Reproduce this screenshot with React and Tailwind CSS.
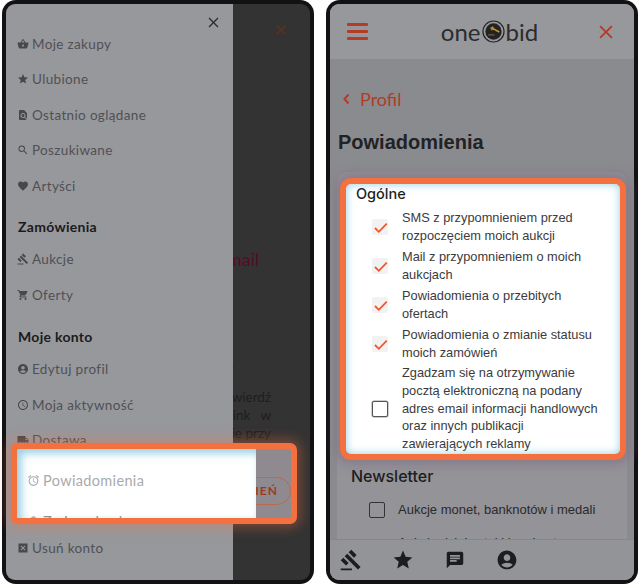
import React from "react";
import { MdShoppingBasket, MdStar, MdFindInPage, MdSearch, MdFavorite, MdGavel, MdShoppingCart, MdAccountCircle, MdAccessTime, MdLocalShipping, MdAlarm, MdDisabledByDefault, MdLock, MdChat, MdClose } from "react-icons/md";

const P = "font-['Lato','Noto_Sans',sans-serif]";

function Item({ icon: I, label }) {
  return (
    <div className="flex items-center h-[35.5px] pl-[11px] text-[#4f5054] text-[13.5px] tracking-[0.35px] whitespace-nowrap">
      <I className="w-[12px] h-[12px] mr-[3px] shrink-0 text-[#47484b]" />
      <span>{label}</span>
    </div>
  );
}

function Head({ label, cls }) {
  return <div className={`pl-[12px] font-bold text-[14px] tracking-[0.3px] text-[#1b1b1d] h-[18px] leading-[18px] ${cls}`}>{label}</div>;
}

function LeftPhone() {
  return (
    <div className="relative w-[312px] h-[584px] bg-[#121214] rounded-[14px] p-[4px]">
      <div className={`flex h-full rounded-[9px] overflow-hidden ${P}`}>
        <div className="w-[227px] shrink-0 bg-[#97989c] overflow-hidden">
          <div className="flex justify-end items-start pr-[11px] pt-[10px] h-[22px]">
            <MdClose className="w-[17px] h-[17px] shrink-0 text-[#2f3033]" />
          </div>
          <Item icon={MdShoppingBasket} label="Moje zakupy" />
          <Item icon={MdStar} label="Ulubione" />
          <Item icon={MdFindInPage} label="Ostatnio oglądane" />
          <Item icon={MdSearch} label="Poszukiwane" />
          <Item icon={MdFavorite} label="Artyści" />
          <Head label="Zamówienia" cls="mt-[14px] mb-[6px]" />
          <Item icon={MdGavel} label="Aukcje" />
          <Item icon={MdShoppingCart} label="Oferty" />
          <Head label="Moje konto" cls="mt-[15px] mb-[6px]" />
          <Item icon={MdAccountCircle} label="Edytuj profil" />
          <Item icon={MdAccessTime} label="Moja aktywność" />
          <Item icon={MdLocalShipping} label="Dostawa" />
          <div className="h-[72px]" />
          <Item icon={MdDisabledByDefault} label="Usuń konto" />
        </div>
        <div className="flex-1 bg-[#333333] overflow-hidden">
          <div className="flex justify-end pt-[17px] pr-[20px] h-[54px]">
            <MdClose className="w-[18px] h-[18px] text-[#5e3020]" />
          </div>
          <div className="mt-[189px] h-[24px] text-[18px] leading-[24px] text-[#5c0a24] whitespace-nowrap ml-[-6px]">mail</div>
          <div className="mt-[83px] h-[22px] text-[13px] leading-[22px] text-[#1e1e1e] ml-[-6px]">e</div>
          <div className="mt-[12px] text-[13.5px] leading-[18px] text-[#1e1e1e] whitespace-nowrap w-[38px] flex flex-col items-end">
            <div>wierdź</div>
            <div>link&nbsp;&nbsp; w</div>
            <div>ie przy</div>
          </div>
        </div>
      </div>
      {/* highlighted element */}
      <div className={`absolute left-[9px] top-[443px] w-[286px] h-[81px] border-[6px] border-[#f4703f] rounded-[7px] overflow-hidden flex shadow-[0_0_12px_4px_rgba(244,112,63,0.35)] bg-[#8f8a90] ${P}`}>
        <div className="w-[239px] shrink-0 bg-white shadow-[inset_4px_4px_9px_rgba(100,185,215,0.7)]">
          <div className="flex items-center h-[31px] mt-[16px] pl-[10px] text-[#a9aaad] text-[14.5px] tracking-[0.35px] whitespace-nowrap">
            <MdAlarm className="w-[13px] h-[13px] mr-[3px] shrink-0" />
            <span>Powiadomienia</span>
          </div>
          <div className="flex items-center h-[20px] mt-[16px] pl-[10px] text-[#8f9093] text-[14.5px] tracking-[0.35px] whitespace-nowrap">
            <MdLock className="w-[13px] h-[13px] mr-[3px] shrink-0" />
            <span>Zmiana hasła</span>
          </div>
        </div>
        <div className="flex-1 relative overflow-hidden">
          <div className="absolute right-[0px] top-[28px] left-[-50px] h-[28px] rounded-full border border-[#b96a4b] flex items-center justify-end pr-[12px] text-[12px] font-bold tracking-[1px] text-[#a2391c]">ZMIEŃ</div>
        </div>
      </div>
    </div>
  );
}

function Row({ checked, children, h }) {
  return (
    <div className="flex items-center" style={{ height: h }}>
      <div className="w-[56px] shrink-0 pl-[26px]">
        {checked ? (
          <div className="w-[16px] h-[16px] rounded-[2px] bg-[#f2f2f2]">
            <svg width="16" height="16" viewBox="0 0 16 16">
              <path d="M3 9 L6.8 12.8 L14.8 4.6" fill="none" stroke="#f4562a" strokeWidth="1.8" />
            </svg>
          </div>
        ) : (
          <div className="w-[16px] h-[16px] rounded-[2px] border border-[#555] bg-white shadow-[0_0_0_0.5px_#999]" />
        )}
      </div>
      <div className="text-[12.8px] leading-[17.7px] text-[#3b3b3e] w-[205px]">{children}</div>
    </div>
  );
}

function RightPhone() {
  return (
    <div className="relative w-[312px] h-[584px] bg-[#121214] rounded-[14px] p-[4px]">
      <div className="flex flex-col h-full rounded-[9px] overflow-hidden bg-[#8a8b8f] font-['Liberation_Sans',sans-serif]">
        <header className="h-[55px] shrink-0 bg-[#97989c] flex items-center justify-between pl-[17px] pr-[19px]">
          <div className="w-[21px] flex flex-col gap-[4px]">
            <div className="h-[3px] bg-[#b53a28] rounded-[1px]" />
            <div className="h-[3px] bg-[#b53a28] rounded-[1px]" />
            <div className="h-[3px] bg-[#b53a28] rounded-[1px]" />
          </div>
          <div className={`flex items-center text-[#2b2c2e] text-[24px] font-normal leading-none ${P} ml-[14px]`}>
            <span>one</span>
            <svg width="23" height="23" viewBox="0 0 24 24" className="mx-[1px]">
              <circle cx="12" cy="12" r="11" fill="none" stroke="#232325" strokeWidth="1.2" />
              <circle cx="12" cy="12" r="8.5" fill="#232325" />
              <path d="M8.5 8 L11.5 6.5 L13 9.5 L10 11 Z" fill="#b08a2a" />
              <path d="M11.5 9 L18 12.5" stroke="#c09a35" strokeWidth="1.6" />
              <path d="M6.5 15.5 H13" stroke="#77602a" strokeWidth="1.4" />
            </svg>
            <span>bid</span>
          </div>
          <MdClose className="w-[18px] h-[18px] text-[#b53a28] scale-125" />
        </header>
        <div className="flex-1 overflow-hidden">
          <div className="flex items-center h-[28px] mt-[26px] pl-[13px] text-[#b53a28] text-[18px]">
            <svg width="7" height="12" viewBox="0 0 7 12" className="mr-[10px]">
              <path d="M5.5 1.5 L1.5 6 L5.5 10.5" fill="none" stroke="#b53a28" strokeWidth="2" />
            </svg>
            <span className={P}>Profil</span>
          </div>
          <h1 className="mt-[15px] ml-[8px] h-[28px] text-[20px] leading-[28px] font-bold text-[#222224]">Powiadomienia</h1>
          <div className="mt-[16px] mx-[7px] h-[500px] bg-[#939398] rounded-[10px] pt-[292px]">
            <div className="ml-[14px] h-[24px] text-[16px] leading-[24px] font-medium text-[#1d1d20] font-['Inter',sans-serif]">Newsletter</div>
            <div className="mt-[13px] flex items-center h-[18px] ml-[32px]">
              <div className="w-[16px] h-[16px] border border-[#333] rounded-[2px] mr-[13px]" />
              <span className="text-[13px] text-[#2a2a2c] whitespace-nowrap">Aukcje monet, banknotów i medali</span>
            </div>
            <div className="mt-[14px] ml-[61px] text-[13px] text-[#2a2a2c] whitespace-nowrap">Aukcje dzieł sztuki i malarstwa</div>
          </div>
        </div>
        <nav className="h-[41px] shrink-0 bg-[#939498] border-t border-[#86878b] flex items-center pl-[12px] gap-[34px] text-[#1d1d20]">
          <MdGavel className="w-[18px] h-[18px] scale-125" />
          <MdStar className="w-[18px] h-[18px] scale-125" />
          <MdChat className="w-[18px] h-[18px] scale-110" />
          <MdAccountCircle className="w-[18px] h-[18px] scale-125" />
        </nav>
      </div>
      {/* highlighted element */}
      <div className="absolute left-[14px] top-[178px] w-[286px] h-[282px] border-[6px] border-[#f4703f] rounded-[11px] bg-white shadow-[0_0_10px_5px_rgba(130,110,130,0.6)] font-['Liberation_Sans',sans-serif]">
        <div className="absolute inset-0 rounded-[5px] shadow-[inset_0_0_9px_rgba(100,185,215,0.7)] pointer-events-none" />
        <div className="h-[19px] pl-[10px] text-[14.5px] leading-[19px] font-medium text-[#1d1d20] font-['Inter',sans-serif]">Ogólne</div>
        <div className="mt-[4px]">
          <Row checked h="39px">SMS z przypomnieniem przed rozpoczęciem moich aukcji</Row>
          <Row checked h="39px">Mail z przypomnieniem o moich aukcjach</Row>
          <Row checked h="39px">Powiadomienia o przebitych ofertach</Row>
          <Row checked h="39px">Powiadomienia o zmianie statusu moich zamówień</Row>
          <Row h="91px">Zgadzam się na otrzymywanie pocztą elektroniczną na podany adres email informacji handlowych oraz innych publikacji zawierających reklamy</Row>
        </div>
      </div>
    </div>
  );
}

export default function App() {
  return (
    <div className="w-[639px] h-[585px] bg-white flex gap-[12px] pl-[2px] overflow-hidden">
      <LeftPhone />
      <RightPhone />
    </div>
  );
}
